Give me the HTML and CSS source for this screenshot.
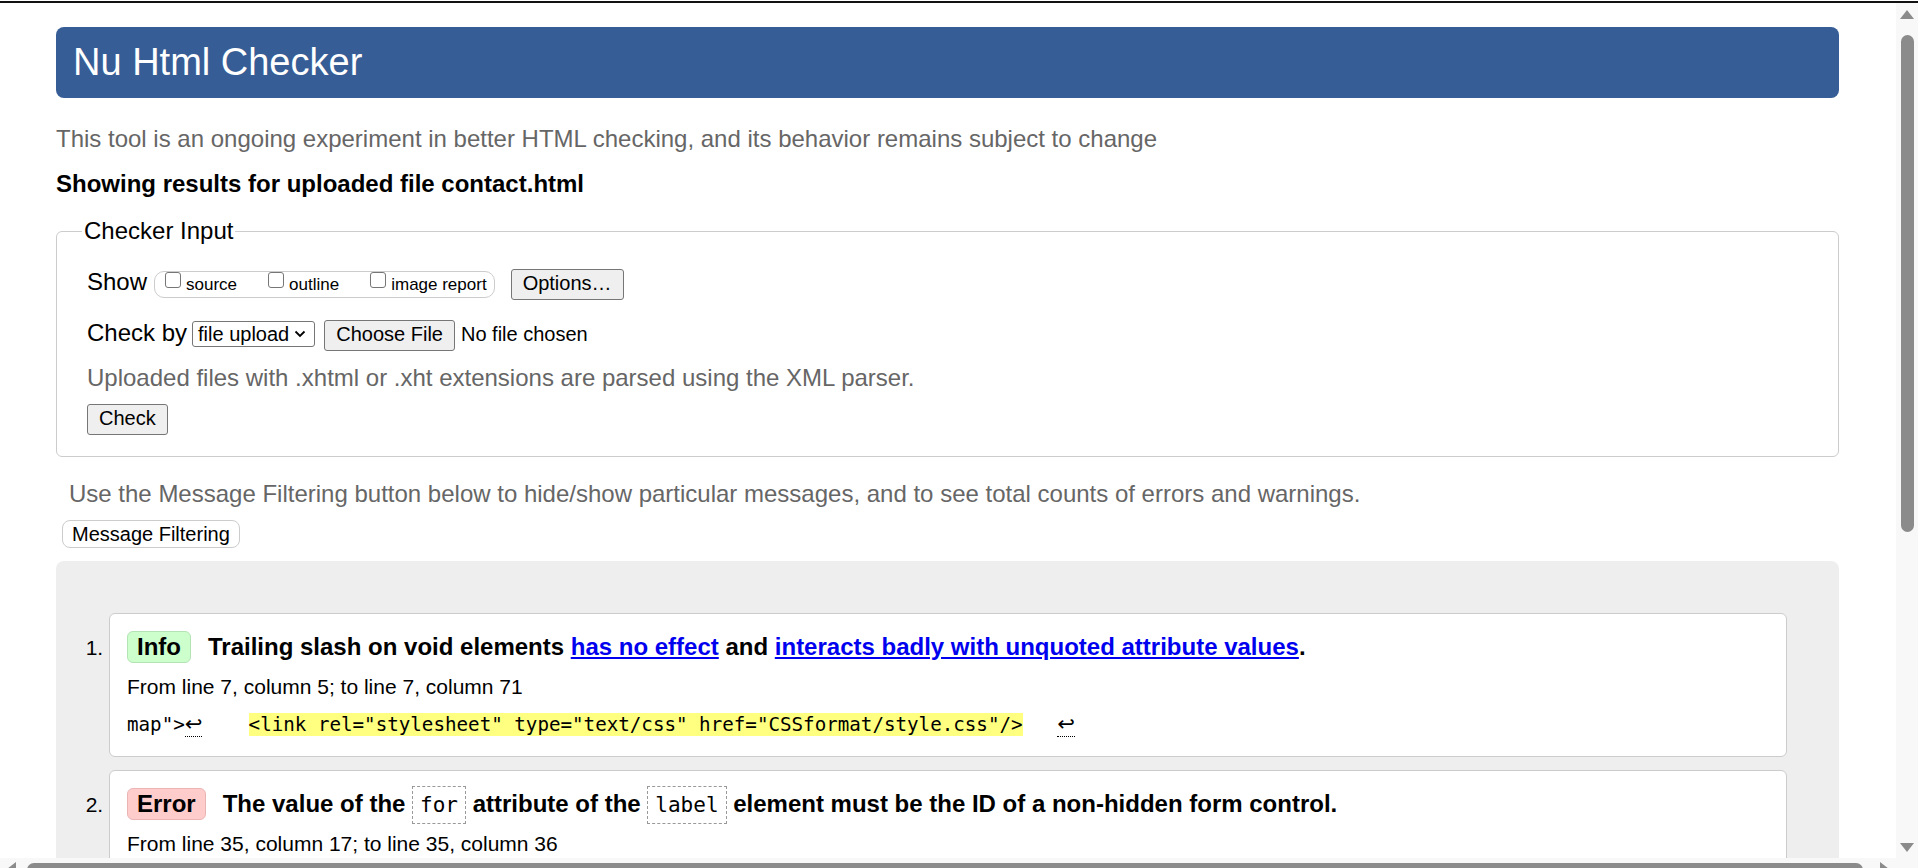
FILE: index.html
```html
<!DOCTYPE html>
<html lang="en">
<head>
<meta charset="utf-8">
<title>Showing results for contact.html - Nu Html Checker</title>
<link rel="stylesheet" href="styles.css">
</head>
<body>
<div class="topline"></div>
<div class="frame">
  <div class="viewport">
    <main class="page">
      <h1 class="title">Nu Html Checker</h1>
      <p class="intro">This tool is an ongoing experiment in better HTML checking, and its behavior remains subject to change</p>
      <p class="showing">Showing results for uploaded file contact.html</p>

      <fieldset class="checker">
        <legend>Checker Input</legend>
        <div class="row row-show">
          <span class="label">Show</span>
          <span class="group"><label class="opt"><input type="checkbox">source</label><label class="opt"><input type="checkbox">outline</label><label class="opt"><input type="checkbox">image report</label></span>
          <button class="btn btn-options" type="button">Options…</button>
        </div>
        <div class="row row-by">
          <span class="label">Check by</span>
          <span class="select">file upload<svg class="chev" width="12" height="8" viewBox="0 0 12 8"><path d="M1.5 1.5 L6 6 L10.5 1.5" fill="none" stroke="#000" stroke-width="1.8"/></svg></span>
          <button class="btn btn-file" type="button">Choose File</button>
          <span class="nofile">No file chosen</span>
        </div>
        <p class="hint">Uploaded files with .xhtml or .xht extensions are parsed using the XML parser.</p>
        <div class="submit"><button class="btn btn-check" type="button">Check</button></div>
      </fieldset>

      <p class="note">Use the Message Filtering button below to hide/show particular messages, and to see total counts of errors and warnings.</p>
      <button class="filter" type="button">Message Filtering</button>

      <section class="results">
        <ol class="messages">
          <li class="msg">
            <p class="msg-title"><strong class="badge badge-info">Info</strong><span class="msg-text">Trailing slash on void elements <a href="#">has no effect</a> and <a href="#">interacts badly with unquoted attribute values</a>.</span></p>
            <p class="location">From line 7, column 5; to line 7, column 71</p>
            <p class="extract"><code>map"&gt;<span class="lf">↩</span>    <mark>&lt;link rel="stylesheet" type="text/css" href="CSSformat/style.css"/&gt;</mark>   <span class="lf">↩</span></code></p>
          </li>
          <li class="msg">
            <p class="msg-title"><strong class="badge badge-error">Error</strong><span class="msg-text">The value of the <code class="attr">for</code> attribute of the <code class="attr">label</code> element must be the ID of a non-hidden form control.</span></p>
            <p class="location">From line 35, column 17; to line 35, column 36</p>
          </li>
        </ol>
      </section>
    </main>
  </div>

  <div class="vscroll">
    <span class="arrow arrow-up"></span>
    <span class="vthumb"></span>
    <span class="vspace"></span>
    <span class="arrow arrow-down"></span>
  </div>
  <div class="hscroll">
    <span class="arrow arrow-left"></span>
    <span class="hthumb"></span>
    <span class="arrow arrow-right"></span>
  </div>
  <div class="corner"></div>
</div>
</body>
</html>
```

FILE: styles.css
```css
* { box-sizing: border-box; }

html, body { margin: 0; padding: 0; }

body {
  height: 868px;
  overflow: hidden;
  background: #fff;
  color: #000;
  font-family: "Liberation Sans", Arial, sans-serif;
  font-size: 24px;
  line-height: 28px;
}

.topline {
  height: 3px;
  border-top: 1px solid #fff;
  background: #111;
}

.frame {
  display: grid;
  grid-template-columns: 1fr 22px;
  grid-template-rows: 855px 10px;
  height: 865px;
}

.viewport { overflow: hidden; min-width: 0; }

.page { padding: 24px 57px 0 56px; }

.title {
  margin: 0;
  height: 71px;
  padding-left: 17px;
  border-radius: 8px;
  background: #365d95;
  color: #fff;
  font-size: 38px;
  font-weight: normal;
  line-height: 71px;
}

.intro { margin: 27px 0 0; color: #666; }

.showing { margin: 17px 0 0; font-weight: bold; }

/* Checker input */
.checker {
  margin: 19px 0 0;
  min-width: 0;
  padding: 0 30px 21px 30px;
  border: 1px solid #ccc;
  border-radius: 6px;
}

.checker legend {
  margin-left: -5px;
  padding: 0 2px;
  font-size: 24px;
  line-height: 28px;
}

.row { display: flex; align-items: baseline; white-space: nowrap; }
.row-show { margin-top: 23px; }
.row-by { margin-top: 19px; }

.label { line-height: 28px; }

.group {
  display: inline-block;
  height: 27px;
  margin-left: 7px;
  padding: 0 7px 0 10px;
  border: 1px solid #ccc;
  border-radius: 10px;
  font-size: 17px;
  line-height: 25px;
}

.opt { margin-right: 31px; }
.opt:last-child { margin-right: 0; }

.opt input {
  -webkit-appearance: none;
  appearance: none;
  display: inline-block;
  width: 16px;
  height: 16px;
  margin: 0 5px 2px 0;
  vertical-align: baseline;
  border: 1px solid #767676;
  border-radius: 3px;
  background: #fff;
}

.btn {
  font-family: "Liberation Sans", Arial, sans-serif;
  font-size: 20px;
  line-height: 23px;
  padding: 2px 11px 4px;
  border: 1px solid #767676;
  border-radius: 3px;
  background: #efefef;
  color: #000;
}

.btn-options { margin-left: 16px; }
.btn-file { margin-left: 9px; }
.btn-check { padding-left: 11px; padding-right: 11px; }

.select {
  display: inline-flex;
  align-items: baseline;
  height: 26px;
  margin-left: 5px;
  padding: 1px 8px 1px 5px;
  border: 1px solid #767676;
  border-radius: 3px;
  background: #fff;
  font-size: 20px;
  line-height: 22px;
}

.chev { margin-left: 5px; align-self: center; }

.nofile { margin-left: 6px; font-size: 20px; line-height: 23px; }

.hint { margin: 13px 0 0; color: #666; }

.submit { display: flex; margin-top: 12px; }

.note { margin: 23px 0 0 13px; color: #666; }

.filter {
  display: block;
  margin: 12px 0 0 6px;
  padding: 2px 9px 1px;
  border: 1px solid #ccc;
  border-radius: 8px;
  background: #fff;
  color: #000;
  font-family: "Liberation Sans", Arial, sans-serif;
  font-size: 20px;
  line-height: 23px;
}

/* Results */
.results {
  margin-top: 13px;
  padding: 52px 0 40px;
  border-radius: 8px 8px 0 0;
  background: #eee;
}

.messages {
  margin: 0;
  padding: 0 52px 0 53px;
  list-style: decimal outside;
}

.msg {
  margin: 0 0 13px;
  padding: 17px 17px 19px;
  border: 1px solid #ccc;
  border-radius: 6px;
  background: #fff;
  font-size: 21px;
  line-height: 24px;
}

.msg::marker { font-size: 21px; }

.msg-title {
  display: flex;
  align-items: center;
  gap: 17px;
  margin: 0;
  font-size: 24px;
  line-height: 28px;
  font-weight: bold;
  white-space: nowrap;
}

.badge {
  display: inline-block;
  padding: 1px 9px;
  border: 1px solid;
  border-radius: 6px;
}

.badge-info { background: #ccffcc; border-color: #b4e4b4; }
.badge-error { background: #ffcccc; border-color: #ebb4b4; }

.msg-text a { color: #0000ee; text-decoration: underline; }

.attr {
  padding: 6px 7px;
  border: 1px dashed #999;
  font-family: "DejaVu Sans Mono", "Liberation Mono", monospace;
  font-size: 21px;
  font-weight: normal;
}

.location { margin: 12px 0 0; }

.extract {
  margin: 13px 0 0;
  font-family: "DejaVu Sans Mono", "Liberation Mono", monospace;
  font-size: 19.2px;
  line-height: 24px;
  white-space: pre;
}

.extract code { font-family: inherit; font-size: inherit; }

.extract mark { background: #ffff80; color: #000; }

.lf {
  font-family: "DejaVu Sans", sans-serif;
  font-size: 21px;
  border-bottom: 1px dotted #000;
}

/* Scrollbars */
.vscroll {
  display: flex;
  flex-direction: column;
  align-items: center;
  background: #f8f8f8;
}

.vthumb {
  width: 13px;
  height: 497px;
  margin-top: 16px;
  border-radius: 7px;
  background: #8b8b8b;
}

.vspace { flex: 1; }

.arrow { display: block; width: 0; height: 0; }

.arrow-up {
  margin-top: 7px;
  border-left: 7px solid transparent;
  border-right: 7px solid transparent;
  border-bottom: 9px solid #8b8b8b;
}

.arrow-down {
  margin-bottom: 6px;
  border-left: 7px solid transparent;
  border-right: 7px solid transparent;
  border-top: 9px solid #8b8b8b;
}

.hscroll {
  display: flex;
  align-items: flex-start;
  background: #f8f8f8;
  overflow: hidden;
}

.arrow-left {
  margin: 4px 0 0 7px;
  border-top: 7px solid transparent;
  border-bottom: 7px solid transparent;
  border-right: 9px solid #8b8b8b;
}

.hthumb {
  width: 1836px;
  height: 10px;
  margin: 5px 0 0 11px;
  border-radius: 7px 7px 0 0;
  background: #8b8b8b;
}

.arrow-right {
  margin: 4px 0 0 17px;
  border-top: 7px solid transparent;
  border-bottom: 7px solid transparent;
  border-left: 9px solid #8b8b8b;
}

.corner { background: #f8f8f8; }
```
